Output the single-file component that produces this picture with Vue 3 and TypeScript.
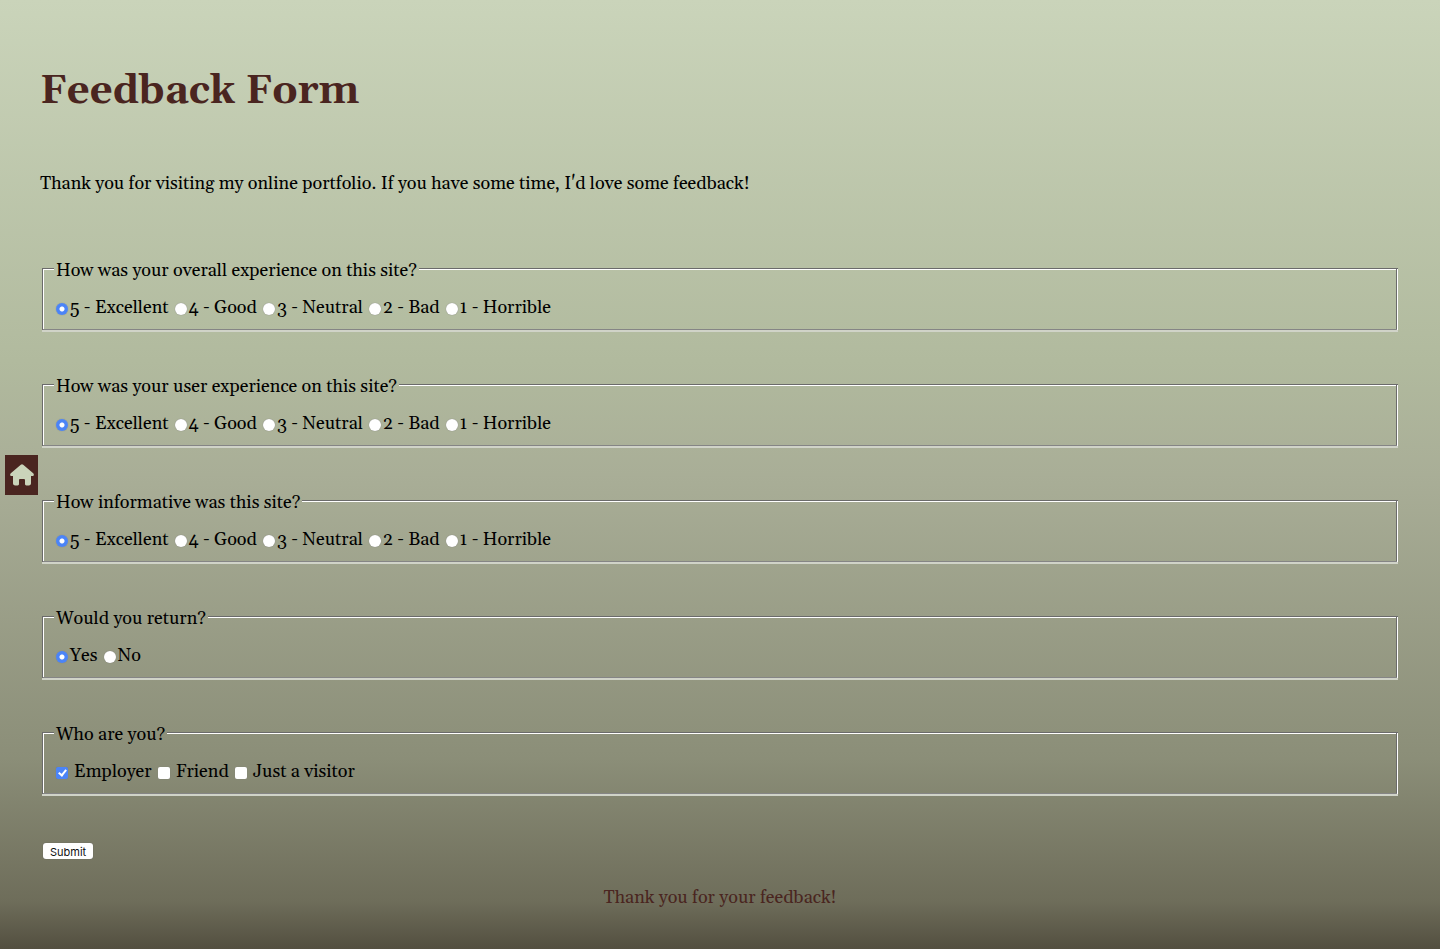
<script setup lang="ts">
interface Question {
  name: string
  legend: string
  options: string[]
}

const ratings: string[] = ['5 - Excellent', '4 - Good', '3 - Neutral', '2 - Bad', '1 - Horrible']

const questions: Question[] = [
  { name: 'overall', legend: 'How was your overall experience on this site?', options: ratings },
  { name: 'user', legend: 'How was your user experience on this site?', options: ratings },
  { name: 'informative', legend: 'How informative was this site?', options: ratings },
  { name: 'return', legend: 'Would you return?', options: ['Yes', 'No'] },
]

const roles: string[] = ['Employer', 'Friend', 'Just a visitor']
</script>

<template>
  <div class="page">
    <a class="home" href="#" aria-label="Home">
      <svg viewBox="0 0 24 22" aria-hidden="true">
        <path
          d="M10.800 .7a1.800 1.800 0 0 1 2.400 0l10 8.600c1.200 1.100.7 2.700-.9 2.700H21v7.200c0 1.400-.8 2.200-2.200 2.200h-2.400c-.9 0-1.400-.5-1.400-1.400v-3.700c0-.8-.5-1.300-1.300-1.300h-3.400c-.8 0-1.300.5-1.300 1.300v3.700c0 .9-.5 1.400-1.400 1.400H5.200C3.800 21.400 3 20.600 3 19.200V12H1.700C.1 12-.4 10.400.8 9.300z"
        />
      </svg>
    </a>

    <main>
      <h1>Feedback Form</h1>
      <p class="intro">
        Thank you for visiting my online portfolio. If you have some time, I'd love some feedback!
      </p>

      <form @submit.prevent>
        <fieldset v-for="q in questions" :key="q.name">
          <legend>{{ q.legend }}</legend>
          <div class="options">
            <label v-for="(option, i) in q.options" :key="option">
              <input type="radio" :name="q.name" :value="option" :checked="i === 0" />{{ option }}
            </label>
          </div>
        </fieldset>

        <fieldset>
          <legend>Who are you?</legend>
          <div class="options">
            <label v-for="(role, i) in roles" :key="role" class="check">
              <input type="checkbox" name="role" :value="role" :checked="i === 0" />{{ role }}
            </label>
          </div>
        </fieldset>

        <button type="submit">Submit</button>
      </form>
    </main>

    <footer>Thank you for your feedback!</footer>
  </div>
</template>

<style>
body {
  margin: 0;
}
</style>

<style scoped>
.page {
  box-sizing: border-box;
  min-height: 100vh;
  padding: 65px 40px 40px;
  background: linear-gradient(#cad4ba 0%, #b1ba9e 38%, #a9ae97 50%, #8b8e78 80%, #6e6d5a 95%, #534f40 100%);
  color: #000;
  font-family: Georgia, Gelasio, "Liberation Serif", serif;
  font-size: 18px;
  line-height: 22px;
}

.home {
  position: fixed;
  top: 50%;
  left: 5px;
  display: flex;
  align-items: center;
  justify-content: center;
  width: 33px;
  height: 40px;
  background: #4a2520;
  transform: translateY(-50%);
}

.home svg {
  width: 24px;
  height: 22px;
  fill: #cad4ba;
}

h1 {
  margin: 0;
  color: #4a2520;
  font-size: 40px;
  line-height: 54px;
}

.intro {
  margin: 54px 0 61px;
}

form {
  display: flex;
  flex-direction: column;
  align-items: stretch;
  gap: 40px;
  padding: 0 2px;
}

fieldset {
  min-width: 0;
  margin: 0;
  padding: 15px 10px 10px;
  border: 2px groove #fff;
  border-bottom-width: 3px;
  border-image: url("data:image/svg+xml,%3Csvg xmlns='http://www.w3.org/2000/svg' width='6' height='7' shape-rendering='crispEdges'%3E%3Cpath fill='%236b6b6b' d='M0 0h6v1H1v5H0zM4 1h1v4H4z'/%3E%3Cpath fill='%23fff' d='M1 1h3v1H2v2H1zM5 1h1v5H5z'/%3E%3Cpath fill='%23858585' d='M1 4h4v1H1z'/%3E%3Cpath fill='%23d0d3c8' d='M0 5h6v2H0z'/%3E%3C/svg%3E") 2 2 3 / 2px 2px 3px stretch;
}

legend {
  padding: 4px 2px 0;
}

.options {
  display: flex;
  flex-wrap: wrap;
  gap: 0 6px;
  padding-left: 2px;
}

label {
  display: flex;
  align-items: center;
  gap: 2px;
}

.check {
  gap: 6px;
}

input {
  flex: none;
  width: 12px;
  height: 12px;
  margin: 2px 0 0;
  appearance: none;
  background: #fff;
  box-shadow: 0 0 1px #777;
}

input[type='radio'] {
  border-radius: 50%;
}

input[type='radio']:checked {
  background: radial-gradient(circle, #fff 0 2px, #4b84f7 3px);
}

input[type='checkbox'] {
  border-radius: 2px;
}

input[type='checkbox']:checked {
  background: #4b84f7;
}

input[type='checkbox']:checked::after {
  display: block;
  width: 3px;
  height: 6px;
  margin: 1px 0 0 4px;
  border: solid #fff;
  border-width: 0 2px 2px 0;
  content: '';
  transform: rotate(38deg);
}

button {
  align-self: flex-start;
  height: 16px;
  margin: 7px 0 0 1px;
  padding: 2px 7px 0;
  border: 0;
  border-radius: 3px;
  background: #fff;
  box-shadow: 0 0 1px #555;
  color: #111;
  font: 11px/14px Inter, sans-serif;
}

footer {
  margin-top: 28px;
  color: #4a2520;
  text-align: center;
}
</style>
